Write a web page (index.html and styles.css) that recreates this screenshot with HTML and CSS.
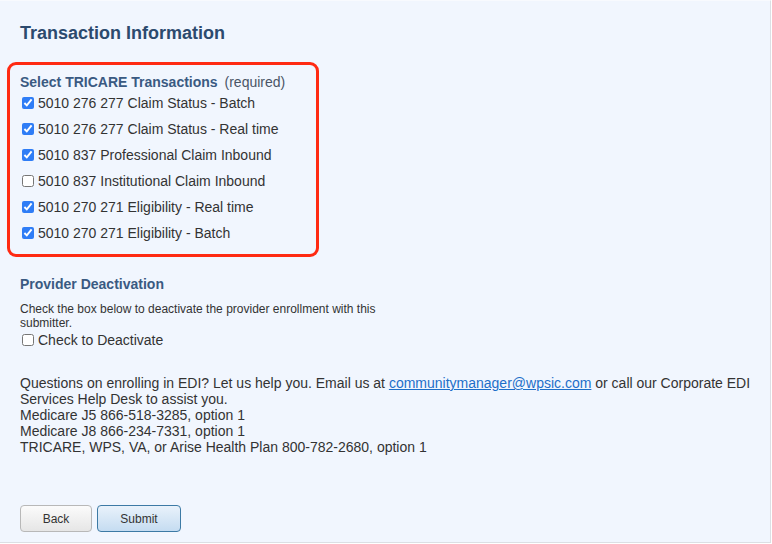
FILE: index.html
```html
<!DOCTYPE html>
<html>
<head>
<meta charset="utf-8">
<link rel="stylesheet" href="styles.css">
</head>
<body>
<div class="panel">
  <h1 class="title">Transaction Information</h1>
  <div class="highlight">
    <div class="group-head"><span class="label">Select TRICARE Transactions</span> <span class="req">(required)</span></div>
    <label class="row"><input type="checkbox" checked><span>5010 276 277 Claim Status - Batch</span></label>
    <label class="row"><input type="checkbox" checked><span>5010 276 277 Claim Status - Real time</span></label>
    <label class="row"><input type="checkbox" checked><span>5010 837 Professional Claim Inbound</span></label>
    <label class="row"><input type="checkbox"><span>5010 837 Institutional Claim Inbound</span></label>
    <label class="row"><input type="checkbox" checked><span>5010 270 271 Eligibility - Real time</span></label>
    <label class="row"><input type="checkbox" checked><span>5010 270 271 Eligibility - Batch</span></label>
  </div>
  <div class="deact">
    <div class="label">Provider Deactivation</div>
    <p class="note">Check the box below to deactivate the provider enrollment with this submitter.</p>
    <label class="row-small"><input type="checkbox"><span>Check to Deactivate</span></label>
  </div>
  <div class="help">
    Questions on enrolling in EDI? Let us help you. Email us at <a href="#">communitymanager@wpsic.com</a> or call our Corporate EDI Services Help Desk to assist you.<br>
    Medicare J5 866-518-3285, option 1<br>
    Medicare J8 866-234-7331, option 1<br>
    TRICARE, WPS, VA, or Arise Health Plan 800-782-2680, option 1
  </div>
  <div class="actions">
    <button class="btn back">Back</button>
    <button class="btn submit">Submit</button>
  </div>
</div>
</body>
</html>
```
FILE: styles.css
```css
html, body {
  margin: 0;
  padding: 0;
  background: #ffffff;
}
body {
  font-family: "Liberation Sans", Arial, sans-serif;
  color: #333333;
}
.panel {
  box-sizing: border-box;
  width: 771px;
  height: 543px;
  background: #f1f6fe;
  border-right: 1px solid #dcdfe4;
  border-bottom: 1px solid #dcdfe4;
  border-top: 1px solid #f8fafe;
  padding: 0 12px 0 20px;
  display: flex;
  flex-direction: column;
}
.title {
  margin: 21px 0 0 0;
  font-size: 18px;
  line-height: 22px;
  font-weight: bold;
  color: #2c4a6e;
}
.highlight {
  margin: 18px 0 0 -13px;
  width: 296px;
  border: 3px solid #ff2a12;
  border-radius: 9px;
  padding: 9px 0 8px 10px;
}
.group-head {
  font-size: 14px;
  line-height: 16px;
}
.label {
  font-weight: bold;
  color: #3a5a82;
  font-size: 14px;
  line-height: 16px;
}
.req {
  color: #4a5566;
  margin-left: 3px;
}
.row, .row-small {
  display: flex;
  align-items: center;
  height: 26px;
  font-size: 14px;
  color: #333333;
}
.row input, .row-small input {
  width: 12px;
  height: 12px;
  margin: 0 4px 0 2px;
  accent-color: #2f7df6;
}
.deact {
  margin-top: 19px;
}
.note {
  margin: 10px 0 0 0;
  width: 380px;
  font-size: 12px;
  line-height: 14px;
  color: #333333;
}
.row-small {
  height: 18px;
  margin-top: 1px;
}
.help {
  margin-top: 26px;
  font-size: 14px;
  line-height: 16px;
  color: #333333;
}
.help a {
  color: #1d6fc9;
  text-decoration: underline;
}
.actions {
  margin-top: 50px;
  display: flex;
  gap: 5px;
}
.btn {
  height: 27px;
  font-family: "Liberation Sans", Arial, sans-serif;
  font-size: 12px;
  color: #333333;
  border-radius: 4px;
  padding: 0;
  cursor: pointer;
}
.back {
  width: 72px;
  border: 1px solid #b8b8b8;
  background: linear-gradient(#fbfbfb, #e6e6e6);
}
.submit {
  width: 84px;
  border: 1px solid #3d7aa5;
  background: linear-gradient(#e9f2fb, #c5dcf1);
}
```
